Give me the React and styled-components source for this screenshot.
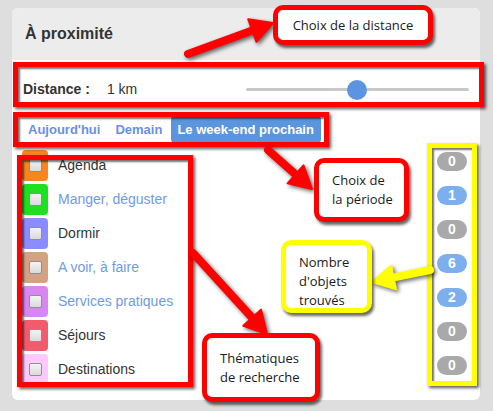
import React from "react";
import styled, { createGlobalStyle } from "styled-components";

const GlobalStyle = createGlobalStyle`
  html, body {
    margin: 0;
    padding: 0;
    background: #dedede;
  }
  * {
    box-sizing: border-box;
  }
`;

const themes = [
  { label: "Agenda", color: "#f7861f", link: false, count: 0 },
  { label: "Manger, déguster", color: "#1fe01f", link: true, count: 1 },
  { label: "Dormir", color: "#8a8cff", link: false, count: 0 },
  { label: "A voir, à faire", color: "#d4a283", link: true, count: 6 },
  { label: "Services pratiques", color: "#d985f2", link: true, count: 2 },
  { label: "Séjours", color: "#f25b6c", link: false, count: 0 },
  { label: "Destinations", color: "#ffc9ff", link: false, count: 0 },
];

const tabs = ["Aujourd'hui", "Demain", "Le week-end prochain"];

const arrows = [
  { x1: 188, y1: 54, x2: 273, y2: 23, color: "#ff0000" },
  { x1: 268, y1: 150, x2: 312, y2: 189, color: "#ff0000" },
  { x1: 430, y1: 270, x2: 372, y2: 282, color: "#ffff00" },
  { x1: 193, y1: 253, x2: 267, y2: 334, color: "#ff0000" },
];

const Arrow = ({ x1, y1, x2, y2, color }) => {
  const len = Math.hypot(x2 - x1, y2 - y1);
  const dx = (x2 - x1) / len;
  const dy = (y2 - y1) / len;
  const head = 22;
  const half = 12;
  const bx = x2 - dx * head;
  const by = y2 - dy * head;
  const points = [
    `${x2},${y2}`,
    `${bx - dy * half},${by + dx * half}`,
    `${bx + dy * half},${by - dx * half}`,
  ].join(" ");
  return (
    <g>
      <line
        x1={x1}
        y1={y1}
        x2={bx + dx * 2}
        y2={by + dy * 2}
        stroke={color}
        strokeWidth="8"
        strokeLinecap="round"
      />
      <polygon points={points} fill={color} strokeLinejoin="round" stroke={color} strokeWidth="2" />
    </g>
  );
};

export default function App() {
  return (
    <>
      <GlobalStyle />
      <Page>
        <Panel>
          <Header>
            <Title>À proximité</Title>
          </Header>
          <DistanceRow>
            <Label>Distance :</Label>
            <Value>1 km</Value>
            <Slider>
              <Knob />
            </Slider>
          </DistanceRow>
          <TabsRow>
            {tabs.map((tab, index) => (
              <Tab key={tab} $active={index === 2}>
                {tab}
              </Tab>
            ))}
          </TabsRow>
          <Body>
            <ThemeList>
              {themes.map((theme) => (
                <ThemeRow key={theme.label}>
                  <Swatch $color={theme.color}>
                    <Check />
                  </Swatch>
                  <ThemeLabel $link={theme.link}>{theme.label}</ThemeLabel>
                </ThemeRow>
              ))}
            </ThemeList>
            <Counts>
              {themes.map((theme) => (
                <CountRow key={theme.label}>
                  <Badge $active={theme.count > 0}>{theme.count}</Badge>
                </CountRow>
              ))}
            </Counts>
          </Body>
        </Panel>

        <Frame $x={13} $y={62} $w={471} $h={45} />
        <Frame $x={13} $y={112} $w={316} $h={35} />
        <Frame $x={17} $y={155} $w={176} $h={232} />
        <Frame $x={427} $y={143} $w={50} $h={243} $color="#ffff00" />

        <Arrows width="493" height="411" viewBox="0 0 493 411">
          {arrows.map((a, i) => (
            <Arrow key={i} {...a} />
          ))}
        </Arrows>

        <Callout $x={273} $y={5} $w={160} $h={40} $center>
          Choix de la distance
        </Callout>
        <Callout $x={314} $y={158} $w={95} $h={64}>
          Choix de
          <br />
          la période
        </Callout>
        <Callout $x={281} $y={240} $w={91} $h={73} $color="#ffff00" $pad={9}>
          Nombre
          <br />
          d'objets
          <br />
          trouvés
        </Callout>
        <Callout $x={202} $y={333} $w={118} $h={69}>
          Thématiques
          <br />
          de recherche
        </Callout>
      </Page>
    </>
  );
}

const Page = styled.div`
  position: relative;
  width: 493px;
  height: 411px;
  padding: 8px 13px 11px 12px;
  background: #dedede;
  overflow: hidden;
  font-family: "Liberation Sans", Arial, sans-serif;
`;

const Panel = styled.div`
  width: 468px;
  height: 392px;
  background: #ffffff;
  border-radius: 6px;
  overflow: hidden;
`;

const Header = styled.div`
  display: flex;
  align-items: center;
  height: 52px;
  padding-left: 13px;
  background: #ececec;
`;

const Title = styled.h1`
  margin: 0;
  font-size: 16px;
  font-weight: bold;
  color: #333333;
`;

const DistanceRow = styled.div`
  display: flex;
  align-items: center;
  height: 54px;
  padding: 4px 11px 0 11px;
  font-size: 14px;
  color: #333333;
`;

const Label = styled.span`
  font-weight: bold;
`;

const Value = styled.span`
  margin-left: 17px;
`;

const Slider = styled.div`
  position: relative;
  width: 223px;
  height: 3px;
  margin-left: auto;
  background: #c8c8c8;
  border-radius: 2px;
`;

const Knob = styled.div`
  position: absolute;
  left: 101px;
  top: -8px;
  width: 20px;
  height: 20px;
  border-radius: 50%;
  background: #5b95e2;
`;

const TabsRow = styled.div`
  display: flex;
  gap: 2px;
  height: 27px;
  margin-top: 2px;
  padding-left: 10px;
`;

const Tab = styled.div`
  display: flex;
  align-items: center;
  padding: 0 7px 0 6px;
  border-radius: 4px;
  font-size: 13px;
  font-weight: bold;
  color: ${(p) => (p.$active ? "#ffffff" : "#6b8fe3")};
  background: ${(p) => (p.$active ? "#5b95de" : "transparent")};
`;

const Body = styled.div`
  display: flex;
  justify-content: space-between;
  padding: 5px 13px 0 10px;
`;

const ThemeList = styled.div`
  display: flex;
  flex-direction: column;
`;

const ThemeRow = styled.div`
  display: flex;
  align-items: center;
  height: 34px;
`;

const Swatch = styled.div`
  display: flex;
  align-items: center;
  justify-content: center;
  width: 26px;
  height: 31px;
  border-radius: 4px;
  background: ${(p) => p.$color};
`;

const Check = styled.div`
  width: 13px;
  height: 13px;
  border: 1px solid #8f8f8f;
  border-radius: 2px;
  background: linear-gradient(#f4f4f4, #dadada);
`;

const ThemeLabel = styled.span`
  margin-left: 10px;
  font-size: 14px;
  color: ${(p) => (p.$link ? "#6f9be6" : "#333333")};
`;

const Counts = styled.div`
  display: flex;
  flex-direction: column;
  margin-top: -4px;
`;

const CountRow = styled.div`
  display: flex;
  align-items: center;
  height: 34px;
`;

const Badge = styled.span`
  display: flex;
  align-items: center;
  justify-content: center;
  width: 30px;
  height: 19px;
  border-radius: 10px;
  font-size: 14px;
  font-weight: bold;
  color: #ffffff;
  background: ${(p) => (p.$active ? "#7daeee" : "#a9a9a9")};
`;

const Frame = styled.div`
  position: absolute;
  left: ${(p) => p.$x}px;
  top: ${(p) => p.$y}px;
  width: ${(p) => p.$w}px;
  height: ${(p) => p.$h}px;
  border: 5px solid ${(p) => p.$color || "#ff0000"};
  box-shadow: 2px 2px 3px rgba(0, 0, 0, 0.65),
    inset 2px 2px 2px rgba(0, 0, 0, 0.55);
  pointer-events: none;
`;

const Arrows = styled.svg`
  position: absolute;
  left: 0;
  top: 0;
  pointer-events: none;
  filter: drop-shadow(2px 2px 2px rgba(0, 0, 0, 0.6));
`;

const Callout = styled.div`
  position: absolute;
  left: ${(p) => p.$x}px;
  top: ${(p) => p.$y}px;
  width: ${(p) => p.$w}px;
  height: ${(p) => p.$h}px;
  display: flex;
  flex-direction: column;
  justify-content: center;
  align-items: ${(p) => (p.$center ? "center" : "flex-start")};
  padding: ${(p) => p.$pad || 0}px 0 0 ${(p) => (p.$center ? 0 : 13)}px;
  border: 5px solid ${(p) => p.$color || "#ff0000"};
  border-radius: 10px;
  background: #ffffff;
  box-shadow: 2px 3px 3px rgba(0, 0, 0, 0.6);
  font-family: "Open Sans", "Noto Sans", sans-serif;
  font-size: 13px;
  line-height: 19px;
  color: #1a1a1a;
`;
